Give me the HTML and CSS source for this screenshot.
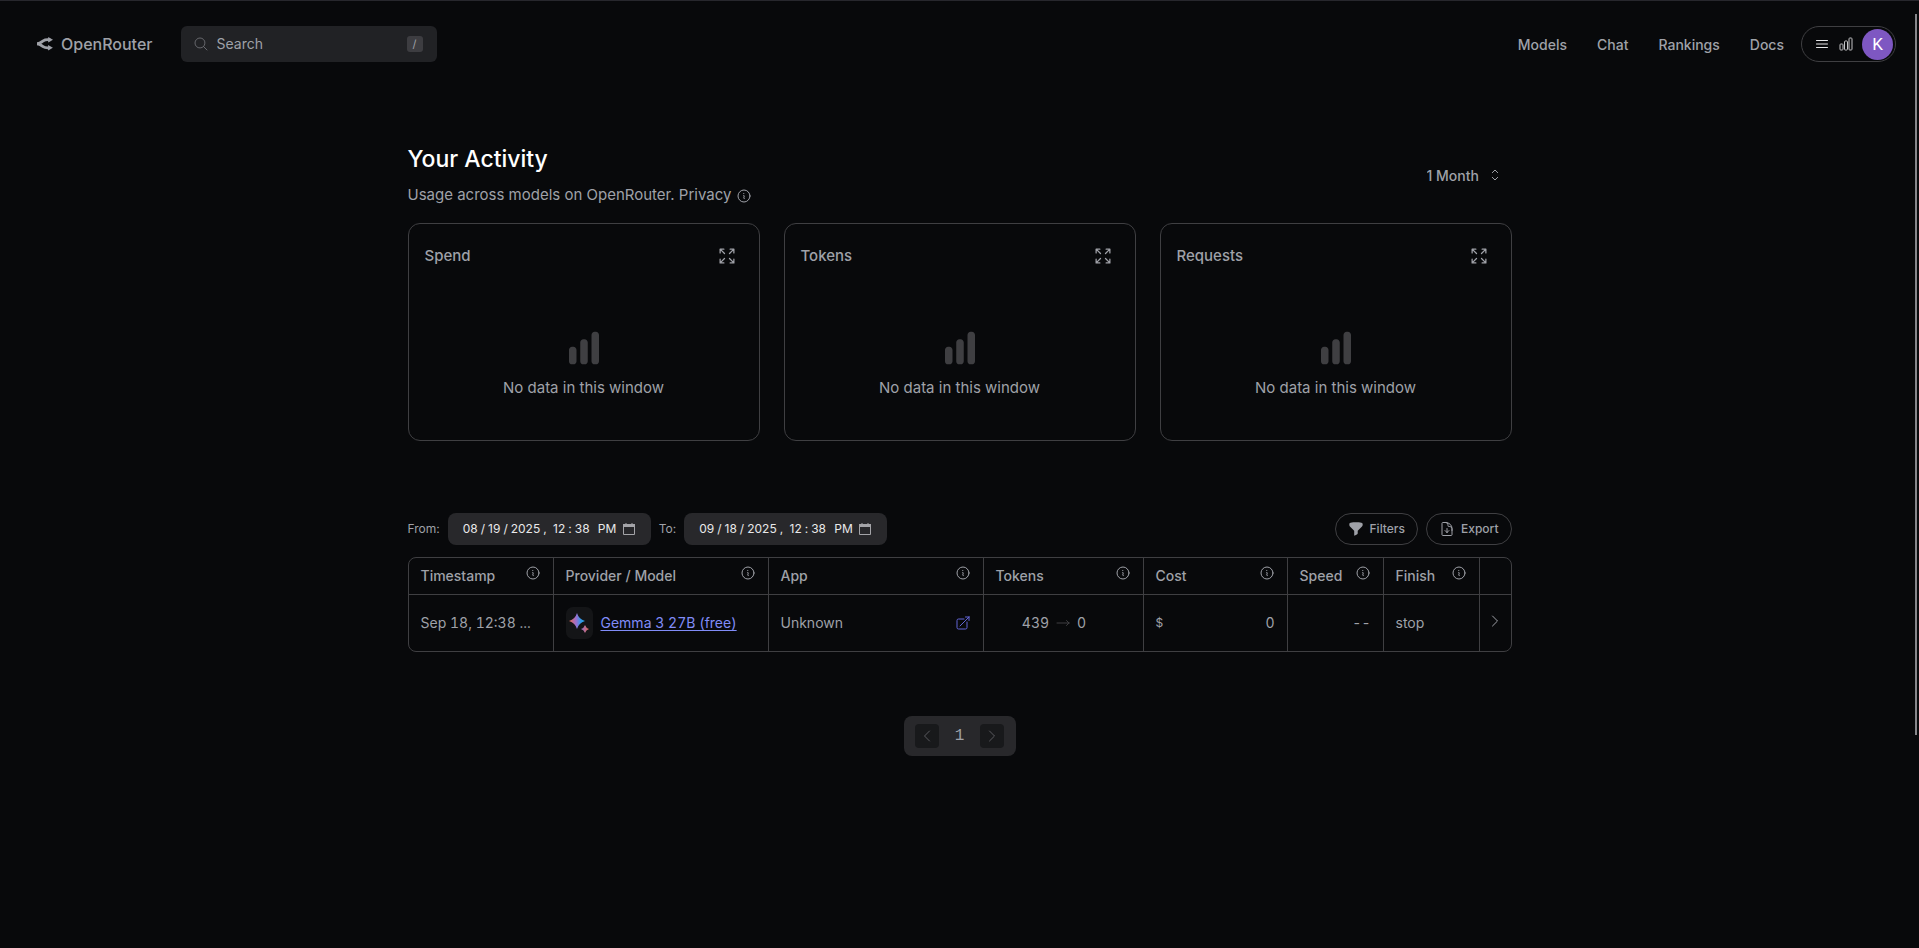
FILE: index.html
```html
<!DOCTYPE html>
<html lang="en">
<head>
<meta charset="utf-8">
<title>Activity | OpenRouter</title>
<link rel="stylesheet" href="styles.css">
</head>
<body>
<svg class="sprite" aria-hidden="true">
  <symbol id="info" viewBox="0 0 24 24"><g fill="none" stroke="currentColor" stroke-width="1.5" stroke-linecap="round" stroke-linejoin="round"><path d="m11.25 11.25.041-.02a.75.75 0 0 1 1.063.852l-.708 2.836a.75.75 0 0 0 1.063.853l.041-.021M21 12a9 9 0 1 1-18 0 9 9 0 0 1 18 0Zm-9-3.75h.008v.008H12V8.25Z"/></g></symbol>
  <symbol id="expand" viewBox="0 0 24 24"><path fill="none" stroke="currentColor" stroke-width="1.5" stroke-linecap="round" stroke-linejoin="round" d="M3.75 3.75v4.5m0-4.5h4.5m-4.5 0L9 9M3.75 20.25v-4.5m0 4.5h4.5m-4.5 0L9 15M20.25 3.75h-4.5m4.5 0v4.5m0-4.5L15 9m5.250 11.25h-4.5m4.5 0v-4.5m0 4.5L15 15"/></symbol>
  <symbol id="bars" viewBox="0 0 24 24"><path fill="currentColor" d="M18.375 2.250c-1.035 0-1.875.84-1.875 1.875v15.750c0 1.035.84 1.875 1.875 1.875h.75c1.035 0 1.875-.84 1.875-1.875V4.125c0-1.036-.84-1.875-1.875-1.875h-.75ZM9.750 8.625c0-1.036.84-1.875 1.875-1.875h.75c1.036 0 1.875.84 1.875 1.875v11.250c0 1.035-.84 1.875-1.875 1.875h-.75a1.875 1.875 0 0 1-1.875-1.875V8.625ZM3 13.125c0-1.036.84-1.875 1.875-1.875h.75c1.036 0 1.875.84 1.875 1.875v6.750c0 1.035-.84 1.875-1.875 1.875h-.75A1.875 1.875 0 0 1 3 19.875v-6.750Z"/></symbol>
  <symbol id="right" viewBox="0 0 24 24"><path fill="none" stroke="currentColor" stroke-width="1.5" stroke-linecap="round" stroke-linejoin="round" d="m8.250 4.500 7.500 7.500-7.500 7.500"/></symbol>
  <symbol id="left" viewBox="0 0 24 24"><path fill="none" stroke="currentColor" stroke-width="1.5" stroke-linecap="round" stroke-linejoin="round" d="M15.750 19.500 8.250 12l7.500-7.500"/></symbol>
</svg>

<header class="topbar">
  <a class="brand" href="#">
    <svg width="16" height="16" viewBox="0 0 512 512" fill="currentColor" stroke="currentColor"><path d="M3 248.945C18 248.945 76 236 106 219C136 202 136 202 198 158C276.497 102.293 332 120.945 423 120.945" stroke-width="90" fill="none"/><path d="M511 121.500L357.250 210.268L357.250 32.727L511 121.500Z"/><path d="M0 249C15 249 73 261.945 103 278.945C133 295.945 133 295.945 195 339.945C273.497 395.652 329 377 420 377" stroke-width="90" fill="none"/><path d="M508 376.445L354.250 287.678L354.250 465.219L508 376.445Z"/></svg>
    OpenRouter
  </a>
  <label class="search">
    <svg width="16" height="16" viewBox="0 0 24 24" fill="none" stroke="currentColor" stroke-width="1.5" stroke-linecap="round"><path d="m21 21-5.197-5.197m0 0A7.500 7.500 0 1 0 5.196 5.196a7.500 7.500 0 0 0 10.607 10.607Z"/></svg>
    <input type="text" placeholder="Search" aria-label="Search">
    <kbd>/</kbd>
  </label>
  <nav class="links">
    <a href="#">Models</a>
    <a href="#">Chat</a>
    <a href="#">Rankings</a>
    <a href="#">Docs</a>
  </nav>
  <button class="account" type="button" aria-label="Account menu">
    <svg width="16" height="16" viewBox="0 0 24 24" fill="none" stroke="currentColor" stroke-width="1.5" stroke-linecap="round"><path d="M3.750 6.750h16.500M3.750 12h16.500m-16.500 5.250h16.500"/></svg>
    <svg class="usage" width="16" height="16" viewBox="0 0 24 24" fill="none" stroke="currentColor" stroke-width="1.500"><path d="M3 13.125C3 12.504 3.504 12 4.125 12h2.250c.621 0 1.125.504 1.125 1.125v6.750C7.500 20.496 6.996 21 6.375 21h-2.250A1.125 1.125 0 0 1 3 19.875v-6.750ZM9.750 8.625c0-.621.504-1.125 1.125-1.125h2.250c.621 0 1.125.504 1.125 1.125v11.250c0 .621-.504 1.125-1.125 1.125h-2.250a1.125 1.125 0 0 1-1.125-1.125V8.625ZM16.500 4.125c0-.621.504-1.125 1.125-1.125h2.250C20.496 3 21 3.504 21 4.125v15.750c0 .621-.504 1.125-1.125 1.125h-2.250a1.125 1.125 0 0 1-1.125-1.125V4.125Z"/></svg>
    <span class="avatar">K</span>
  </button>
</header>

<main class="page">
  <section class="intro">
    <div>
      <h1>Your Activity</h1>
      <p>Usage across models on OpenRouter. <span class="privacy">Privacy <svg width="16" height="16"><use href="#info"/></svg></span></p>
    </div>
    <div class="period">
      <select aria-label="Period"><option>1 Month</option></select>
      <svg width="16" height="16" viewBox="0 0 24 24" fill="none" stroke="currentColor" stroke-width="1.500" stroke-linecap="round" stroke-linejoin="round"><path d="M8 8.500 12 4.500l4 4M8 15.500l4 4 4-4"/></svg>
    </div>
  </section>

  <section class="cards">
    <article class="card">
      <header><h2>Spend</h2><button type="button" aria-label="Expand spend"><svg width="20" height="20"><use href="#expand"/></svg></button></header>
      <div class="empty"><svg width="40" height="40"><use href="#bars"/></svg><p>No data in this window</p></div>
    </article>
    <article class="card">
      <header><h2>Tokens</h2><button type="button" aria-label="Expand tokens"><svg width="20" height="20"><use href="#expand"/></svg></button></header>
      <div class="empty"><svg width="40" height="40"><use href="#bars"/></svg><p>No data in this window</p></div>
    </article>
    <article class="card">
      <header><h2>Requests</h2><button type="button" aria-label="Expand requests"><svg width="20" height="20"><use href="#expand"/></svg></button></header>
      <div class="empty"><svg width="40" height="40"><use href="#bars"/></svg><p>No data in this window</p></div>
    </article>
  </section>

  <section class="toolbar">
    <label for="from">From:</label>
    <input id="from" type="datetime-local" value="2025-08-19T12:38">
    <label for="to">To:</label>
    <input id="to" type="datetime-local" value="2025-09-18T12:38">
    <button class="pill first" type="button"><svg width="16" height="16" viewBox="0 0 24 24" fill="currentColor"><path d="M3.800 2.600C6.500 2.200 9.200 2 12 2s5.500.2 8.200.6c.9.200 1.800.9 1.800 2v1.300c0 .9-.4 1.700-1 2.300l-6 6c-.3.300-.4.700-.4 1.100v3c0 .9-.5 1.700-1.300 2.100l-3 1.500a.7.700 0 0 1-1-.7v-5.900c0-.4-.1-.8-.4-1.100l-6-6c-.6-.6-.9-1.400-.9-2.300V4.600c0-1.100.8-1.800 1.800-2Z"/></svg>Filters</button>
    <button class="pill" type="button"><svg width="16" height="16" viewBox="0 0 24 24" fill="none" stroke="currentColor" stroke-width="1.500" stroke-linecap="round" stroke-linejoin="round"><path d="M19.500 14.250v-2.625a3.375 3.375 0 0 0-3.375-3.375h-1.500A1.125 1.125 0 0 1 13.500 7.125v-1.500a3.375 3.375 0 0 0-3.375-3.375H8.250m.75 12 3 3m0 0 3-3m-3 3v-6m-1.500-9H5.625c-.621 0-1.125.504-1.125 1.125v17.250c0 .621.504 1.125 1.125 1.125h12.750c.621 0 1.125-.504 1.125-1.125V11.250a9 9 0 0 0-9-9Z"/></svg>Export</button>
  </section>

  <div class="tablewrap">
    <table>
      <colgroup><col class="c-time"><col class="c-model"><col class="c-app"><col class="c-tokens"><col class="c-cost"><col class="c-speed"><col class="c-finish"><col class="c-more"></colgroup>
      <thead>
        <tr>
          <th><div>Timestamp<svg width="16" height="16"><use href="#info"/></svg></div></th>
          <th><div>Provider / Model<svg width="16" height="16"><use href="#info"/></svg></div></th>
          <th><div>App<svg width="16" height="16"><use href="#info"/></svg></div></th>
          <th><div>Tokens<svg width="16" height="16"><use href="#info"/></svg></div></th>
          <th><div>Cost<svg width="16" height="16"><use href="#info"/></svg></div></th>
          <th><div>Speed<svg width="16" height="16"><use href="#info"/></svg></div></th>
          <th><div>Finish<svg width="16" height="16"><use href="#info"/></svg></div></th>
          <th></th>
        </tr>
      </thead>
      <tbody>
        <tr>
          <td>Sep 18, 12:38 ...</td>
          <td><div class="model"><span class="logo"><svg width="22" height="22" viewBox="0 0 22 22"><defs><linearGradient id="g1"><stop offset="0" stop-color="#e8694f"/><stop offset=".45" stop-color="#9a6fd0"/><stop offset=".75" stop-color="#2f9be8"/><stop offset="1" stop-color="#2a9de0"/></linearGradient><linearGradient id="g2"><stop offset="0" stop-color="#8a6fd0"/><stop offset="1" stop-color="#e8694f"/></linearGradient></defs><path fill="url(#g1)" d="M9 1Q10.800 7.200 17 9 10.800 10.800 9 17 7.200 10.800 1 9 7.200 7.200 9 1Z"/><path fill="url(#g2)" d="M17 13q1 3 4 4-3 1-4 4-1-3-4-4 3-1 4-4Z"/></svg></span><a href="#">Gemma 3 27B (free)</a></div></td>
          <td><div class="split">Unknown<a href="#" aria-label="Open app"><svg width="16" height="16" viewBox="0 0 24 24" fill="none" stroke="currentColor" stroke-width="1.500" stroke-linecap="round" stroke-linejoin="round"><path d="M13.500 6H5.250A2.250 2.250 0 0 0 3 8.250v10.500A2.250 2.250 0 0 0 5.250 21h10.500A2.250 2.250 0 0 0 18 18.750V10.500m-10.500 6L21 3m0 0h-5.250M21 3v5.250"/></svg></a></div></td>
          <td><div class="flow">439<svg width="16" height="16" viewBox="0 0 24 24" fill="none" stroke="currentColor" stroke-width="1.500" stroke-linecap="round" stroke-linejoin="round"><path d="M17.250 8.250 21 12m0 0-3.750 3.750M21 12H3"/></svg>0</div></td>
          <td><div class="split"><span class="unit">$</span><span>0</span></div></td>
          <td class="right">--</td>
          <td>stop</td>
          <td class="more"><button type="button" aria-label="Details"><svg width="16" height="16"><use href="#right"/></svg></button></td>
        </tr>
      </tbody>
    </table>
  </div>

  <nav class="pager" aria-label="Pagination">
    <button type="button" aria-label="Previous page"><svg width="16" height="16"><use href="#left"/></svg></button>
    <span>1</span>
    <button type="button" aria-label="Next page"><svg width="16" height="16"><use href="#right"/></svg></button>
  </nav>
</main>
<div class="scroll-thumb"></div>
</body>
</html>
```
FILE: styles.css
```css
* { box-sizing: border-box; }
:root {
  color-scheme: dark;
  --bg: #08090b;
  --line: #3f3f42;
  --muted: #9fa1a8;
}
body {
  margin: 0;
  min-height: 100vh;
  background: var(--bg);
  color: var(--muted);
  border-top: 1px solid #27272d;
  font: 16px/24px Inter, "Liberation Sans", sans-serif;
}
h1, h2, p { margin: 0; font-weight: 400; }
a { color: inherit; text-decoration: none; }
button { padding: 0; border: 0; background: none; color: inherit; font: inherit; }
svg { display: block; flex: none; }
.sprite { display: none; }

.topbar {
  display: flex;
  align-items: center;
  height: 86px;
  padding: 0 23px 0 37px;
}
.brand { display: flex; align-items: center; gap: 8px; font-weight: 500; }
.search {
  display: flex;
  align-items: center;
  gap: 8px;
  width: 256px;
  height: 36px;
  margin-left: 28px;
  padding: 0 14px 0 12px;
  border-radius: 6px;
  background: #212225;
}
.search svg { color: #66676c; }
.search input {
  flex: 1;
  min-width: 0;
  padding: 0;
  border: 0;
  background: none;
  color: inherit;
  font: 14px/20px Inter, sans-serif;
}
.search input::placeholder { color: var(--muted); opacity: 1; }
.search kbd {
  width: 16px;
  height: 16px;
  border-radius: 3px;
  background: #3d3d41;
  font: 11px/16px Inter, sans-serif;
  text-align: center;
}
.links { display: flex; gap: 30px; margin-left: auto; font-size: 14px; font-weight: 500; line-height: 20px; padding-top: 2px; }
.account {
  display: flex;
  align-items: center;
  gap: 8px;
  height: 36px;
  margin-left: 17px;
  padding: 0 2px 0 12px;
  border: 1px solid var(--line);
  border-radius: 18px;
  color: #e6e6e8;
}
.account .usage { color: #c4c4c7; }
.avatar {
  width: 31px;
  height: 31px;
  border-radius: 50%;
  background: #7e57c2;
  color: #fff;
  font: 17px/31px Roboto, sans-serif;
}

.page { width: min(1104px, 100% - 48px); margin: 0 auto; padding-top: 56px; }
.intro { display: flex; align-items: center; justify-content: space-between; margin-bottom: 14px; }
.intro h1 { color: #fff; font-size: 23px; font-weight: 500; line-height: 32px; }
.intro p { margin-top: 6px; font-size: 15px; line-height: 28px; }
.privacy svg { display: inline-block; vertical-align: -4px; }
.period { position: relative; }
.period select {
  appearance: none;
  padding: 8px 32px 8px 12px;
  border: 0;
  background: none;
  color: inherit;
  font: 500 14px/20px Inter, sans-serif;
}
.period svg { position: absolute; right: 9px; top: 9px; pointer-events: none; }

.cards { display: grid; grid-template-columns: repeat(3, 1fr); gap: 24px; }
.card {
  display: flex;
  flex-direction: column;
  min-height: 218px;
  padding: 16px;
  border: 1px solid var(--line);
  border-radius: 12px;
}
.card header { display: flex; align-items: center; justify-content: space-between; height: 32px; padding-right: 6px; }
.card h2 { font-size: 15px; font-weight: 500; line-height: 24px; }
.empty { display: flex; flex-direction: column; align-items: center; justify-content: center; flex: 1; gap: 8px; padding-top: 32px; font-size: 15px; }
.empty svg { color: #3f3f42; }

.toolbar { display: flex; align-items: center; gap: 8px; margin: 72px 0 12px; font-size: 12px; line-height: 16px; }
.toolbar input {
  width: 203px;
  height: 32px;
  padding: 0 15px 0 14px;
  border: 0;
  border-radius: 8px;
  background: #28282b;
  color: #e8e8ea;
  font: 12px/16px Inter, sans-serif;
}
.toolbar input::-webkit-datetime-edit-text { padding: 0 2px; }
.toolbar input::-webkit-calendar-picker-indicator {
  width: 14px;
  height: 14px;
  margin: 0;
  padding: 0;
  background: url("data:image/svg+xml,%3Csvg xmlns='http://www.w3.org/2000/svg' viewBox='0 0 14 14'%3E%3Cpath fill='none' stroke='%23a4a4a8' d='M1.500 2.500h11v10h-11zM4 1v2M10 1v2'/%3E%3Cpath fill='%23a4a4a8' d='M1 2h12v3H1z'/%3E%3C/svg%3E") center / 14px no-repeat;
}
.pill {
  display: flex;
  align-items: center;
  gap: 6px;
  height: 32px;
  padding: 0 12px;
  border: 1px solid var(--line);
  border-radius: 16px;
  font-weight: 500;
}
.pill.first { margin-left: auto; }

.tablewrap { border: 1px solid var(--line); border-radius: 8px; overflow: hidden; }
table { width: 100%; table-layout: fixed; border-collapse: separate; border-spacing: 0; font-size: 14px; line-height: 20px; font-variant-numeric: tabular-nums; }
.c-time { width: 144px; }
.c-tokens { width: 160px; }
.c-cost { width: 144px; }
.c-speed, .c-finish { width: 96px; }
.c-more { width: 32px; }
th, td { padding: 0 12px; text-align: left; font-weight: 400; white-space: nowrap; }
th + th, td + td { border-left: 1px solid var(--line); }
th { height: 36px; font-weight: 500; }
td { height: 57px; border-top: 1px solid var(--line); }
th div { display: flex; align-items: flex-start; justify-content: space-between; }
th svg { margin-top: -1px; }
.model { display: flex; align-items: center; gap: 8px; }
.model a { color: #818cf8; text-decoration: underline; text-underline-offset: 2px; }
.logo { display: flex; align-items: center; justify-content: center; width: 27px; height: 32px; border-radius: 7px; background: #141517; }
.split { display: flex; align-items: center; justify-content: space-between; }
.split a { color: #6366d8; }
.flow { display: flex; align-items: center; justify-content: center; gap: 6px; padding-right: 18px; }
.flow svg { color: #3f3f42; }
.unit { font-size: 12px; }
.right { text-align: right; }
td.more { padding: 0 7px; }

.pager {
  display: flex;
  align-items: center;
  justify-content: space-between;
  width: 112px;
  height: 40px;
  margin: 64px auto 0;
  padding: 0 11px;
  border-radius: 8px;
  background: #28282b;
  font-family: "Liberation Mono", monospace;
}
.pager button { display: flex; align-items: center; justify-content: center; width: 24px; height: 24px; border-radius: 4px; background: #18191b; color: #5a5a5f; }
.scroll-thumb { position: fixed; top: 14px; right: 2px; width: 2px; height: 721px; background: #86868a; }
```
